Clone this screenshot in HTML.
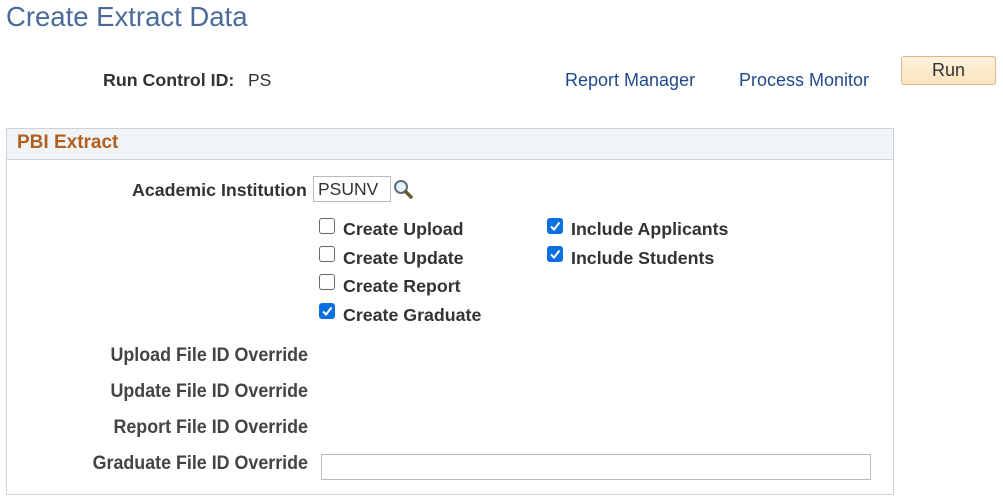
<!DOCTYPE html>
<html><head><meta charset="utf-8"><style>
body{margin:0;width:1003px;height:499px;background:#fff;font-family:"Liberation Sans",Arial,sans-serif;position:relative;overflow:hidden;color:#333}
.a{position:absolute;white-space:nowrap}
.b{font-weight:bold;font-size:17.8px;color:#333}
.lnk{color:#1f4a8c;font-size:18px}
.cb{position:absolute;width:14px;height:14px;border:1px solid #666;border-radius:3px;background:#fff}
.cb.on{background:#0a6fe0;border-color:#0a6fe0}
.cb.on svg{position:absolute;left:1px;top:1px}
.ov{font-weight:bold;font-size:19px;color:#444;transform:scaleX(0.94);transform-origin:right center;text-align:right;width:260px}
</style></head><body>
<div class="a" style="left:6px;top:1px;font-size:27.5px;color:#4a6b9a">Create Extract Data</div>
<div class="a b" style="left:103px;top:70px">Run Control ID:</div>
<div class="a" style="left:248px;top:70px;font-size:17.5px;color:#333">PS</div>
<div class="a lnk" style="left:565px;top:70px">Report Manager</div>
<div class="a lnk" style="left:739px;top:70px">Process Monitor</div>
<div class="a" style="left:901px;top:56px;width:93px;height:27px;border:1px solid #d9b98a;border-radius:3px;background:linear-gradient(#fdf1dc,#fbe3bd);text-align:center;line-height:27px;font-size:18px;color:#333">Run</div>

<div class="a" style="left:6px;top:128px;width:886px;height:365px;border:1px solid #cfd3d8"></div>
<div class="a" style="left:7px;top:129px;width:886px;height:30px;background:#f1f4f6;border-bottom:1px solid #cfd3d8"></div>
<div class="a" style="left:17px;top:132px;font-size:19px;font-weight:bold;color:#b05f1e">PBI Extract</div>

<div class="a b" style="left:132px;top:180px">Academic Institution</div>
<div class="a" style="left:313px;top:176px;font-size:17.5px;line-height:24px;padding-left:4px;box-sizing:border-box;width:78px;height:26px;border:1px solid #bbb">PSUNV</div>
<svg class="a" style="left:393px;top:179px" width="21" height="21" viewBox="0 0 21 21"><circle cx="8" cy="8" r="6" fill="#e8f2fa" stroke="#5a6f80" stroke-width="2"/><path d="M12.5 12.5 L18 18" stroke="#6b5a30" stroke-width="3.5" stroke-linecap="round"/></svg>

<div class="cb" style="left:319px;top:218px"></div><div class="a b" style="left:343px;top:219px">Create Upload</div>
<div class="cb" style="left:319px;top:246px"></div><div class="a b" style="left:343px;top:248px">Create Update</div>
<div class="cb" style="left:319px;top:274px"></div><div class="a b" style="left:343px;top:276px">Create Report</div>
<div class="cb on" style="left:319px;top:303px"><svg width="12" height="12" viewBox="0 0 12 12"><path d="M2 6.5L5 9.5L10.5 2.5" stroke="#fff" stroke-width="2" fill="none"/></svg></div><div class="a b" style="left:343px;top:305px">Create Graduate</div>
<div class="cb on" style="left:547px;top:218px"><svg width="12" height="12" viewBox="0 0 12 12"><path d="M2 6.5L5 9.5L10.5 2.5" stroke="#fff" stroke-width="2" fill="none"/></svg></div><div class="a b" style="left:571px;top:219px">Include Applicants</div>
<div class="cb on" style="left:547px;top:246px"><svg width="12" height="12" viewBox="0 0 12 12"><path d="M2 6.5L5 9.5L10.5 2.5" stroke="#fff" stroke-width="2" fill="none"/></svg></div><div class="a b" style="left:571px;top:248px">Include Students</div>

<div class="a ov" style="left:48px;top:345px">Upload File ID Override</div>
<div class="a ov" style="left:48px;top:381px">Update File ID Override</div>
<div class="a ov" style="left:48px;top:417px">Report File ID Override</div>
<div class="a ov" style="left:48px;top:453px">Graduate File ID Override</div>
<div class="a" style="left:321px;top:454px;width:550px;height:26px;border:1px solid #bbb;box-sizing:border-box"></div>
</body></html>
